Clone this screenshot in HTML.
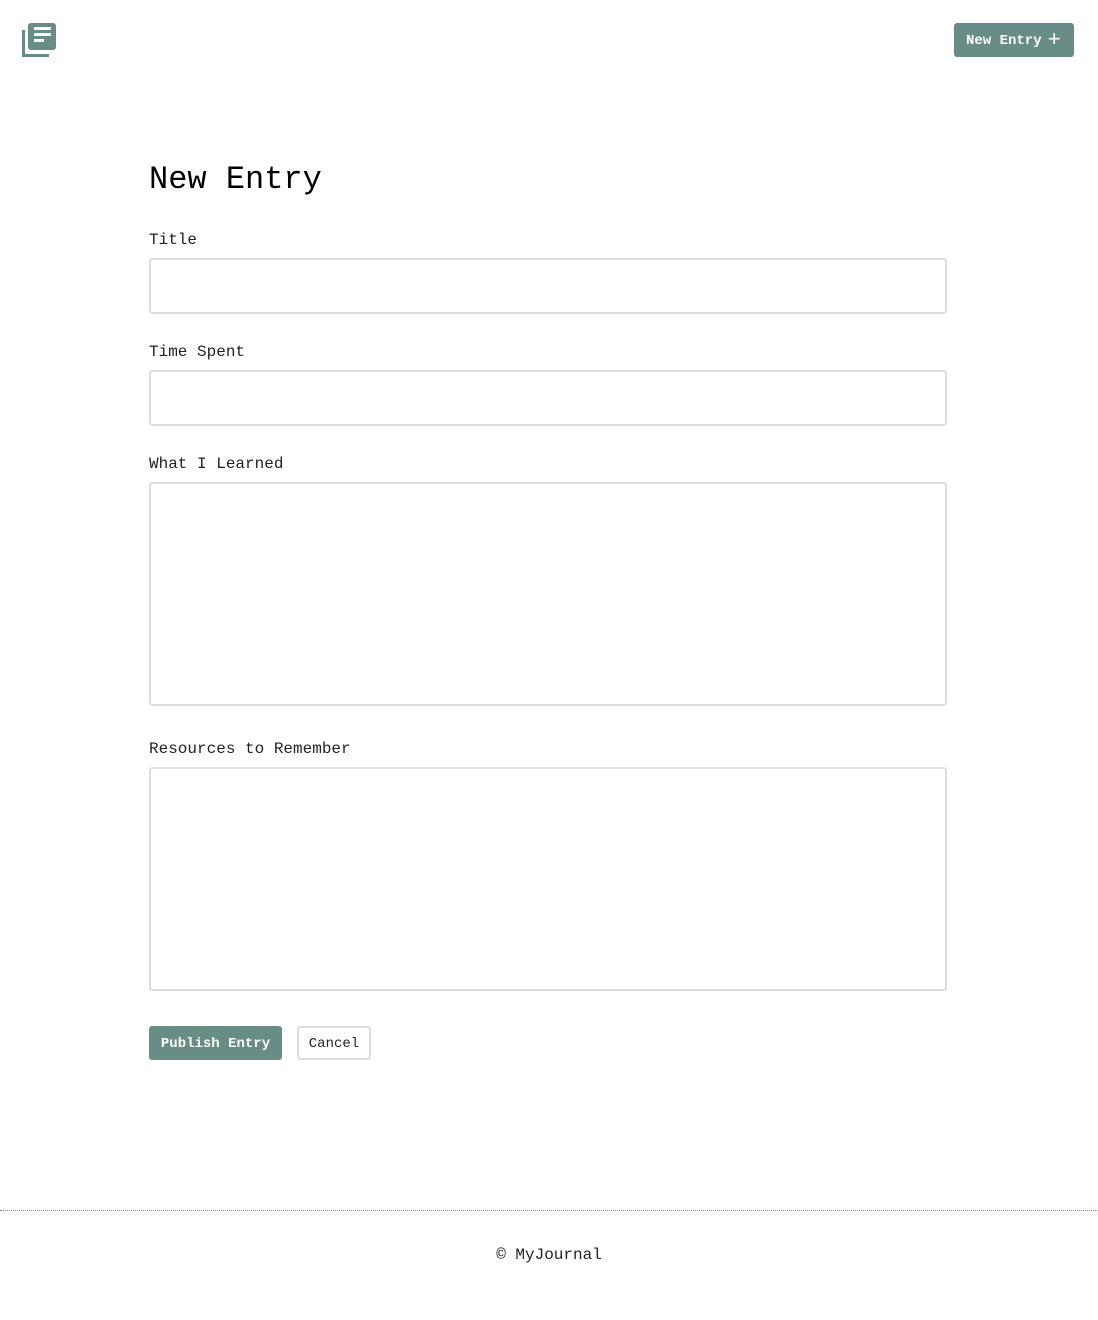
<!DOCTYPE html>
<html><head><style>
body{margin:0;background:#fff;font-family:"Liberation Mono",monospace;color:#222;width:1098px;height:1320px;position:relative;overflow:hidden}
.btn{position:absolute;background:#678d86;color:#fff;font-weight:bold;font-size:14px;border-radius:3px;box-sizing:border-box;display:flex;align-items:center;padding-top:2px}
h1{position:absolute;left:149px;top:161px;margin:0;font-size:32px;font-weight:normal;color:#000}
.lbl{position:absolute;left:149px;font-size:16px;color:#222}
.box{position:absolute;left:149px;width:798px;border:2px solid #ddd;border-radius:3px;box-sizing:border-box}
</style></head><body>
<svg style="position:absolute;left:20px;top:20px" width="40" height="40" viewBox="0 0 40 40">
<path d="M3.5 10 V35.5 H29" fill="none" stroke="#678d86" stroke-width="3"/>
<rect x="8" y="3" width="28" height="27" rx="3" fill="#678d86"/>
<rect x="14" y="7" width="17" height="3" fill="#fff"/>
<rect x="14" y="13" width="17" height="3" fill="#fff"/>
<rect x="14" y="19" width="10" height="3" fill="#fff"/>
</svg>
<div class="btn" style="left:954px;top:23px;width:120px;height:34px;padding-left:12px">New Entry <span style="font-size:22px;font-weight:normal;margin-left:6px;margin-top:-2px">+</span></div>
<h1>New Entry</h1>
<div class="lbl" style="top:231px">Title</div>
<div class="box" style="top:258px;height:56px"></div>
<div class="lbl" style="top:343px">Time Spent</div>
<div class="box" style="top:370px;height:56px"></div>
<div class="lbl" style="top:455px">What I Learned</div>
<div class="box" style="top:482px;height:224px"></div>
<div class="lbl" style="top:740px">Resources to Remember</div>
<div class="box" style="top:767px;height:224px"></div>
<div class="btn" style="left:149px;top:1026px;width:133px;height:34px;justify-content:center">Publish Entry</div>
<div style="position:absolute;left:297px;top:1026px;width:74px;height:34px;padding-top:2px;border:2px solid #ddd;border-radius:3px;box-sizing:border-box;font-size:14px;display:flex;align-items:center;justify-content:center">Cancel</div>
<div style="position:absolute;left:0;top:1210px;width:1098px;border-top:1px dotted #678d86"></div>
<div style="position:absolute;left:0;width:1098px;top:1246px;text-align:center;font-size:16px">© MyJournal</div>
</body></html>
